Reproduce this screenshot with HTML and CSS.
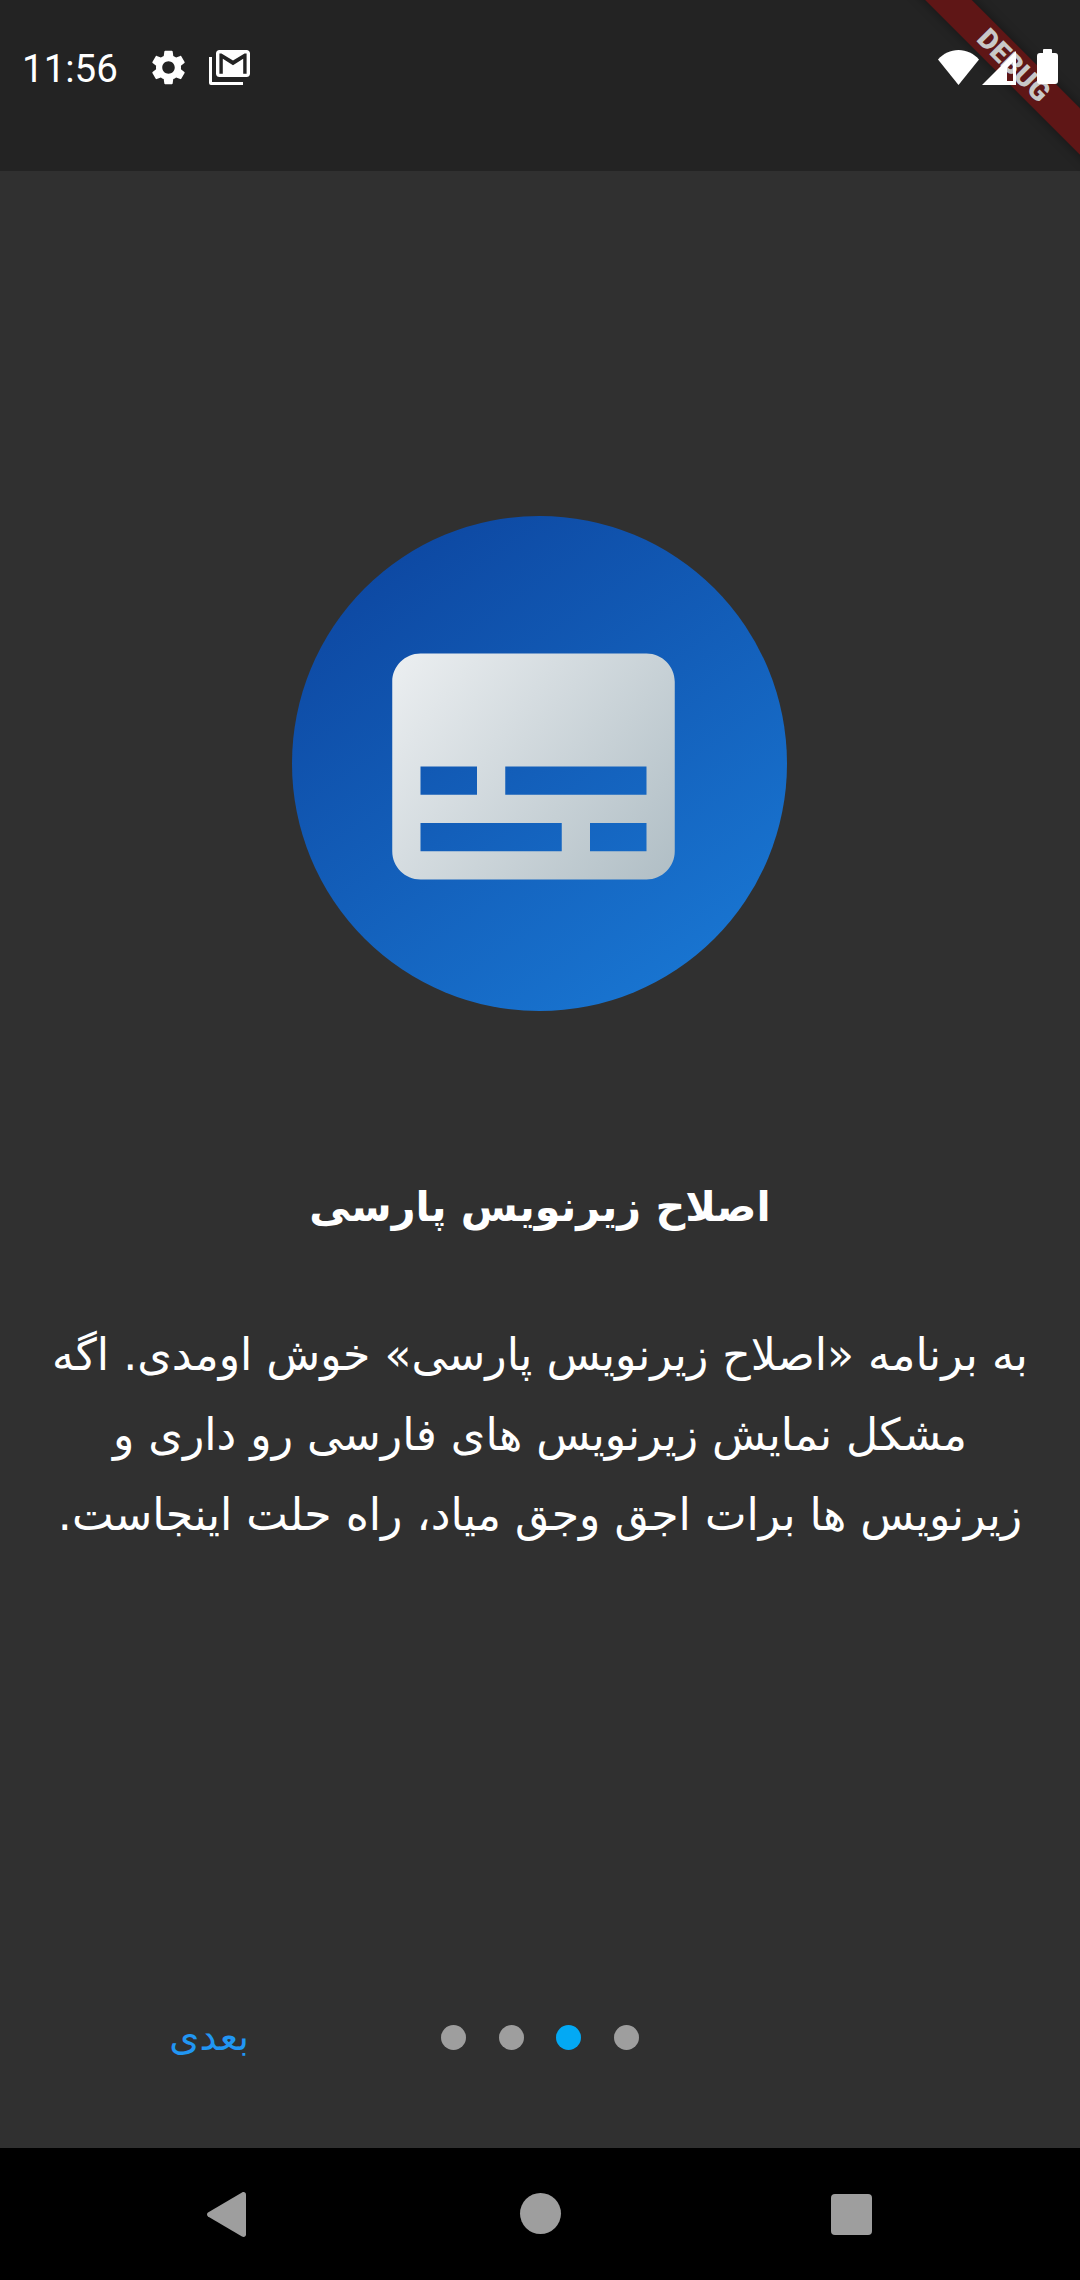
FILE: index.html
```html
<!DOCTYPE html>
<html lang="fa">
<head>
<meta charset="utf-8">
<title>اصلاح زیرنویس پارسی</title>
<link rel="stylesheet" href="styles.css">
</head>
<body>
<div class="screen">
  <header class="status">
    <span class="time">11:56</span>
    <svg class="gear" viewBox="2.5 2 19 20"><path fill="#fff" d="M19.14 12.94c.04-.3.06-.61.06-.94 0-.32-.02-.64-.07-.94l2.03-1.58c.18-.14.23-.41.12-.61l-1.92-3.32c-.12-.22-.37-.29-.59-.22l-2.39.96c-.5-.38-1.03-.7-1.62-.94l-.36-2.54c-.04-.24-.24-.41-.48-.41h-3.84c-.24 0-.43.17-.47.41l-.36 2.54c-.59.24-1.13.57-1.62.94l-2.39-.96c-.22-.08-.47 0-.59.22L2.74 8.87c-.12.21-.08.47.12.61l2.03 1.58c-.05.3-.09.63-.09.94s.02.64.07.94l-2.03 1.58c-.18.14-.23.41-.12.61l1.92 3.32c.12.22.37.29.59.22l2.39-.96c.5.38 1.03.7 1.62.94l.36 2.54c.05.24.24.41.48.41h3.84c.24 0 .44-.17.47-.41l.36-2.54c.59-.24 1.13-.56 1.62-.94l2.39.96c.22.08.47 0 .59-.22l1.92-3.32c.12-.22.07-.47-.12-.61l-2.01-1.58zM12 15.6c-1.98 0-3.6-1.62-3.6-3.6s1.62-3.6 3.6-3.6 3.6 1.62 3.6 3.6-1.62 3.6-3.6 3.6z"/></svg>
    <svg class="mail" viewBox="0 0 41 35">
      <g transform="translate(7 0) scale(1.7 1.6875) translate(-2 -4)"><path fill="#fff" fill-rule="evenodd" d="M20 4H4c-1.100 0-2 .9-2 2v12c0 1.100.9 2 2 2h16c1.100 0 2-.9 2-2V6c0-1.100-.9-2-2-2zM20 18h-2V9.250L12 13 6 9.250V18H4V6h1.200l6.800 4.250L18.800 6H20z"/></g>
      <path fill="#fff" d="M0 7h3v25h31v3H2a2 2 0 0 1-2-2z"/>
    </svg>
    <span class="spacer"></span>
    <svg class="wifi" viewBox="0 0 41 35"><path fill="#fff" d="M20.500 35 0 9.500C5.500 3.500 12.500 0 20.500 0S35.500 3.500 41 9.500z"/></svg>
    <svg class="signal" viewBox="0 0 35 34"><path fill="#fff" fill-rule="evenodd" d="M0 34 34 0v34zM25 30h6V11l-6 6z"/></svg>
    <svg class="battery" viewBox="0 0 21 35"><path fill="#fff" d="M7 0h7a1 1 0 0 1 1 1v3h3a3 3 0 0 1 3 3v25a3 3 0 0 1-3 3H3a3 3 0 0 1-3-3V7a3 3 0 0 1 3-3h3V1a1 1 0 0 1 1-1z"/></svg>
  </header>

  <div class="ribbon"><span class="ribbon-text">DEBUG</span></div>

  <main class="content">
    <div class="badge">
      <svg class="badge-icon" viewBox="0 0 24 24">
        <defs>
          <linearGradient id="cardGrad" x1="2" y1="4" x2="22" y2="20" gradientUnits="userSpaceOnUse">
            <stop offset="0" stop-color="#eceff1"/>
            <stop offset="1" stop-color="#b0bec5"/>
          </linearGradient>
        </defs>
        <path fill="url(#cardGrad)" d="M20 4H4c-1.100 0-2 .9-2 2v12c0 1.100.9 2 2 2h16c1.100 0 2-.9 2-2V6c0-1.100-.9-2-2-2zM4 12h4v2H4v-2zm10 6H4v-2h10v2zm6 0h-4v-2h4v2zm0-4H10v-2h10v2z"/>
      </svg>
    </div>
    <h1 class="title" dir="rtl">اصلاح زیرنویس پارسی</h1>
    <p class="body-text" dir="rtl">به برنامه «اصلاح زیرنویس پارسی» خوش اومدی. اگه<br>مشکل نمایش زیرنویس های فارسی رو داری و<br>زیرنویس ها برات اجق وجق میاد، راه حلت اینجاست.</p>
    <div class="pager">
      <span class="next" dir="rtl">بعدی</span>
      <div class="dots">
        <span class="dot"></span>
        <span class="dot"></span>
        <span class="dot dot-active"></span>
        <span class="dot"></span>
      </div>
    </div>
  </main>

  <nav class="navbar">
    <svg class="nav-back" viewBox="0 0 39 45"><path fill="#9e9e9e" d="M1 24.500a2.500 2.500 0 0 1 0-4L35 .5c2-1 4 0 4 2v40c0 2-2 3-4 2z"/></svg>
    <span class="nav-home"></span>
    <span class="nav-recent"></span>
  </nav>
</div>
</body>
</html>
```
FILE: styles.css
```css
* { box-sizing: border-box; }
html, body { margin: 0; padding: 0; background: #303030; }
.screen {
  position: relative;
  width: 1080px;
  height: 2280px;
  display: flex;
  flex-direction: column;
  overflow: hidden;
  font-family: "DejaVu Sans", "Noto Sans", sans-serif;
  color: #fff;
}
.status {
  flex: 0 0 171px;
  display: flex;
  align-items: flex-start;
  padding-left: 22px;
  background: #232323;
}
.time {
  margin-top: 46px;
  font: 400 38.500px/46px Roboto, sans-serif;
  color: #fff;
}
.gear { width: 33px; height: 35px; margin: 50px 0 0 34px; }
.mail { width: 41px; height: 35px; margin: 50px 0 0 24px; }
.spacer { flex: 1; }
.wifi, .signal, .battery { position: relative; z-index: 2; }
.wifi { width: 41px; height: 35px; margin-top: 50px; }
.signal { width: 35px; height: 34px; margin: 51px 0 0 3px; }
.battery { width: 21px; height: 35px; margin: 49px 22px 0 20px; }

.ribbon {
  position: absolute;
  z-index: 1;
  top: 46.500px;
  right: -82px;
  width: 300px;
  height: 33px;
  padding-left: 5px;
  background: #5f1616;
  box-shadow: 0 0 12px rgba(0, 0, 0, 0.4);
  transform: rotate(45deg);
  display: flex;
  align-items: center;
  justify-content: center;
}
.ribbon-text {
  font: 900 28px/33px Roboto, sans-serif;
  color: #c8c8c8;
}

.content {
  flex: 1;
  display: flex;
  flex-direction: column;
  align-items: center;
  padding-top: 345px;
  background: #303030;
}
.badge {
  width: 495px;
  height: 495px;
  margin-right: 1px;
  border-radius: 50%;
  background: linear-gradient(145deg, #0d47a1 10%, #1976d2 90%);
  display: flex;
  align-items: center;
  justify-content: center;
}
.badge-icon { width: 339px; height: 339px; flex: none; margin: 6px 13px 0 0; }
.title {
  margin: 161px 0 0;
  font-size: 41.300px;
  line-height: 70px;
  font-weight: 700;
  text-align: center;
}
.body-text {
  margin: 73px 0 0;
  width: 1060px;
  font-size: 44.200px;
  line-height: 80px;
  text-align: center;
}
.pager {
  margin-top: auto;
  margin-bottom: 86px;
  width: 100%;
  display: flex;
  align-items: center;
  padding-left: 172px;
}
.next {
  width: 77px;
  font-size: 38.500px;
  line-height: 50px;
  color: #2196f3;
  white-space: nowrap;
}
.dots { display: flex; gap: 32.700px; margin-left: 192px; }
.dot { width: 25px; height: 25px; border-radius: 50%; background: #9e9e9e; }
.dot-active { background: #03a9f4; }

.navbar {
  flex: 0 0 132px;
  background: #000;
  display: flex;
  align-items: flex-start;
  padding-left: 207px;
}
.nav-back { width: 39px; height: 45px; margin-top: 44px; }
.nav-home { width: 41px; height: 41px; margin: 45px 0 0 274px; border-radius: 50%; background: #9e9e9e; }
.nav-recent { width: 41px; height: 41px; margin: 46px 0 0 270px; border-radius: 4px; background: #9e9e9e; }
```
